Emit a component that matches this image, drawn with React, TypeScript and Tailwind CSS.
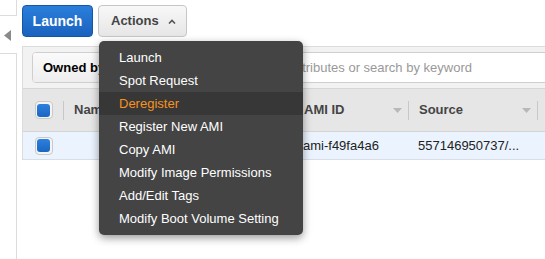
import React from "react";

const menuItems = [
  "Launch",
  "Spot Request",
  "Deregister",
  "Register New AMI",
  "Copy AMI",
  "Modify Image Permissions",
  "Add/Edit Tags",
  "Modify Boot Volume Setting",
];

const Checkbox = () => (
  <div className="w-[18px] h-[18px] rounded-[4px] border border-[#c9c9c9] bg-[#f4f4f4] flex items-center justify-center">
    <div className="w-[13px] h-[13px] rounded-[3px] bg-gradient-to-b from-[#2d80de] to-[#1a66c4]" />
  </div>
);

const SortArrow = () => (
  <svg width="9" height="5" viewBox="0 0 9 5">
    <path d="M0 0 L9 0 L4.5 5 Z" fill="#b8b8b8" />
  </svg>
);

const App = () => {
  return (
    <div className="relative w-[545px] h-[259px] overflow-hidden bg-white flex font-['Liberation_Sans',Arial,sans-serif] text-[13px] text-[#222]">
      {/* collapsed side panel */}
      <div className="w-[22px] shrink-0 flex flex-col">
        <div className="w-[17px] h-[16px] border-r border-b border-[#dcdcdc]" />
        <div className="h-[37px] pl-[4px] pt-[14px]">
          <svg width="7" height="11" viewBox="0 0 7 11">
            <path d="M7 0 L7 11 L0 5.5 Z" fill="#8a8a8a" />
          </svg>
        </div>
        <div className="w-[17px] flex-1 border-r border-t border-[#dcdcdc]" />
      </div>

      <div className="flex-1 flex flex-col min-w-0">
        {/* toolbar */}
        <div className="h-[46px] pt-[5px] flex gap-[5px] items-start">
          <button className="w-[71px] h-[32px] rounded-[4px] border border-[#1557a5] bg-gradient-to-b from-[#2a7fdb] to-[#1a62be] text-white font-bold text-[14px]">
            Launch
          </button>
          <button className="w-[89px] h-[32px] rounded-[4px] border border-[#c6c6c6] bg-gradient-to-b from-[#f8f8f8] to-[#e6e6e6] text-[#444] font-bold text-[13px] flex items-center pl-[12px] gap-[9px]">
            Actions
            <svg width="8" height="5" viewBox="0 0 8 5">
              <path d="M1 4.5 L4 1.5 L7 4.5" stroke="#555" strokeWidth="1.6" fill="none" />
            </svg>
          </button>
        </div>

        {/* panel */}
        <div className="flex flex-col border-t border-l border-[#dcdcdc]">
          <div className="h-[42px] bg-[#f2f2f2] border-b border-[#d6d6d6] pl-[9px] pt-[5px] overflow-hidden">
            <div className="w-[580px] h-[31px] flex rounded-[4px] border border-[#cfcfcf] bg-white overflow-hidden">
              <div className="w-[150px] shrink-0 bg-gradient-to-b from-[#fafafa] to-[#eeeeee] border-r border-[#cfcfcf] flex items-center pl-[10px] font-bold text-black">
                Owned by me
              </div>
              <div className="flex items-center pl-[5px] text-[#999] whitespace-nowrap">
                Filter by tags and attributes or search by keyword
              </div>
            </div>
          </div>

          {/* table header */}
          <div className="h-[43px] bg-[#e6e6e6] border-b border-[#d4d4d4] flex items-center font-bold text-[#444]">
            <div className="w-[40px] shrink-0 flex justify-center pl-[1px]">
              <Checkbox />
            </div>
            <div className="w-[230px] shrink-0 h-[19px] border-l border-[#c8c8c8] flex items-center pl-[10px]">
              Name
            </div>
            <div className="w-[115px] shrink-0 h-[19px] border-l border-[#c8c8c8] flex items-center justify-between pl-[10px] pr-[6px]">
              AMI ID
              <SortArrow />
            </div>
            <div className="w-[130px] shrink-0 h-[19px] border-l border-r border-[#c8c8c8] flex items-center justify-between pl-[10px] pr-[6px]">
              Source
              <SortArrow />
            </div>
          </div>

          {/* selected row */}
          <div className="h-[28px] bg-[#eaf3fe] border-b border-[#d9dee6] flex items-center">
            <div className="w-[40px] shrink-0 flex justify-center pl-[1px]">
              <Checkbox />
            </div>
            <div className="w-[230px] shrink-0" />
            <div className="w-[115px] shrink-0 pl-[10px]">ami-f49fa4a6</div>
            <div className="w-[130px] shrink-0 pl-[10px]">557146950737/...</div>
          </div>
        </div>
      </div>

      {/* actions menu */}
      <div className="absolute left-[99px] top-[41px] w-[204px] py-[5px] rounded-[5px] bg-[#444444] shadow-[0_3px_8px_rgba(0,0,0,0.4)] text-white">
        {menuItems.map((item) => (
          <div
            key={item}
            className={
              item === "Deregister"
                ? "h-[23px] flex items-center pl-[20px] bg-[#373737] text-[#f7921e]"
                : "h-[23px] flex items-center pl-[20px]"
            }
          >
            {item}
          </div>
        ))}
      </div>
    </div>
  );
};

export default App;
